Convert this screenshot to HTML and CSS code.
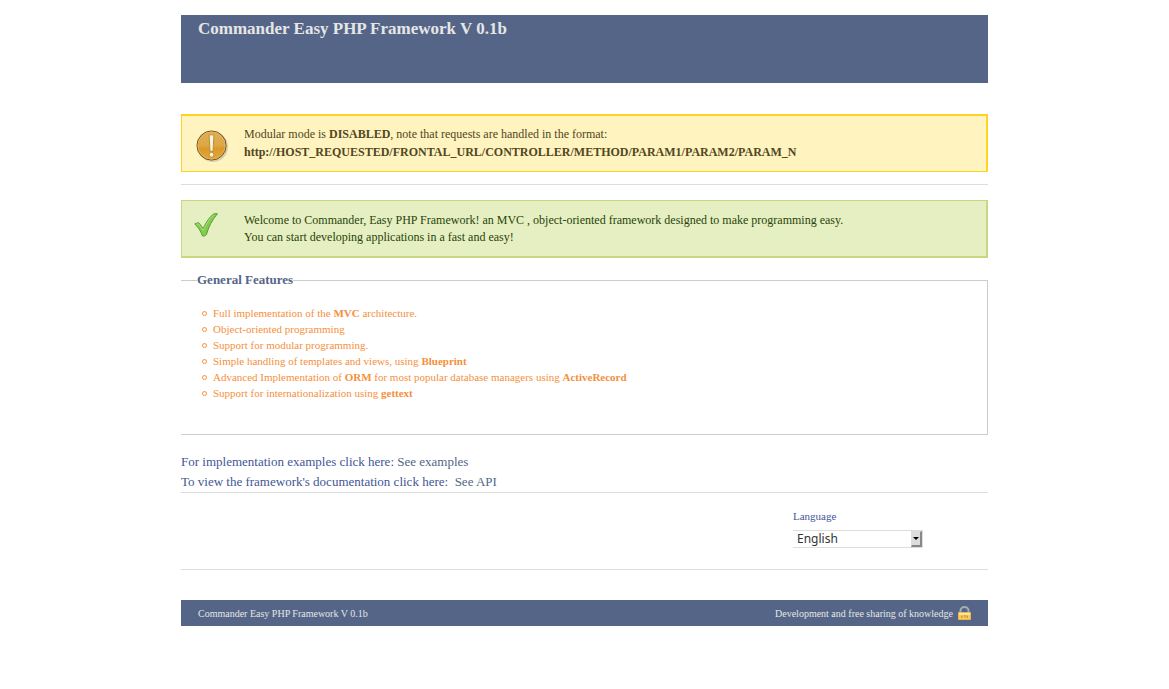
FILE: index.html
```
<!DOCTYPE html>
<html lang="en">
<head>
    <meta charset="UTF-8">
    <meta name="viewport" content="width=device-width, initial-scale=1.0">
    <title>Commander Easy PHP Framework</title>
    <link rel="stylesheet" href="styles.css">
</head>
<body>
    <div class="container">
        <header class="header">
            <h1>Commander Easy PHP Framework V 0.1b</h1>
        </header>

        <div class="notice">
            <svg class="icon-notice" viewBox="0 0 34 34" aria-hidden="true">
                <defs>
                    <linearGradient id="amber" x1="0" y1="0" x2="0" y2="1">
                        <stop offset="0" stop-color="#dfae58"/>
                        <stop offset="0.5" stop-color="#dda743"/>
                        <stop offset="0.6" stop-color="#d99a2a"/>
                        <stop offset="1" stop-color="#e5a838"/>
                    </linearGradient>
                </defs>
                <circle cx="17.5" cy="17.5" r="15.5" fill="#d8cfae"/>
                <circle cx="16" cy="16" r="15" fill="url(#amber)" stroke="#6b4c1c"/>
                <circle cx="16" cy="16" r="14" fill="none" stroke="#e3b258"/>
                <path d="M13.500 5h5l-1 17h-3z" fill="#fdf6d8" stroke="#b98b38"/>
                <circle cx="16" cy="25.500" r="2.500" fill="#fdf6d8" stroke="#b98b38"/>
            </svg>
            <p>Modular mode is <strong>DISABLED</strong>, note that requests are handled in the format:<br>
            <strong>http://HOST_REQUESTED/FRONTAL_URL/CONTROLLER/METHOD/PARAM1/PARAM2/PARAM_N</strong></p>
        </div>
        <hr>
        <div class="success">
            <svg class="icon-success" viewBox="0 0 24 24" aria-hidden="true">
                <path d="M0.700 11 4.500 9.500 9.300 15.500C12 9 16 3.500 20 0.800L23.500 0.700C18 7 14.500 14 12.500 21.500L10.500 23H8.500C6.500 18 4.500 14 0.700 11Z" fill="#82cc4c" stroke="#5c9c3a"/>
                <path d="M2.500 11.300 4.300 10.800 9.300 17.500C12.500 10 16.500 4.500 20.500 1.800" fill="none" stroke="#a9e07c"/>
            </svg>
            <p>Welcome to Commander, Easy PHP Framework! an MVC , object-oriented framework designed to make programming easy.<br>
            You can start developing applications in a fast and easy!</p>
        </div>

        <fieldset>
            <legend>General Features</legend>
            <ul>
                <li>Full implementation of the <strong>MVC</strong> architecture.</li>
                <li>Object-oriented programming</li>
                <li>Support for modular programming.</li>
                <li>Simple handling of templates and views, using <strong>Blueprint</strong></li>
                <li>Advanced Implementation of <strong>ORM</strong> for most popular database managers using <strong>ActiveRecord</strong></li>
                <li>Support for internationalization using <strong>gettext</strong></li>
            </ul>
        </fieldset>

        <div class="links">
            For implementation examples click here: <a href="#">See examples</a><br>
            To view the framework's documentation click here:&nbsp; <a href="#">See API</a>
        </div>
        <hr>
        <form class="language">
            <label for="language">Language</label>
            <div class="select-box">
                <select id="language">
                    <option>English</option>
                    <option>Spanish</option>
                </select>
                <span class="arrow"></span>
            </div>
        </form>
        <hr>
        <footer class="footer">
            <span>Commander Easy PHP Framework V 0.1b</span>
            <span class="share">Development and free sharing of knowledge
                <svg class="icon-lock" viewBox="0 0 13 14" aria-hidden="true">
                    <path d="M2.500 7V4.500a4 3.500 0 0 1 8 0V7" fill="none" stroke="#a9acb0" stroke-width="2"/>
                    <path d="M0.500 6.500h12v7h-12z" fill="#f6cf62" stroke="#e8b648"/>
                    <path d="M1 7h11v1.500H1z" fill="#fdf0b4"/>
                    <path d="M3 9.500h1.500V12H3zM6 9h1.500v2.500H6zM8.500 9.500H10V12H8.500z" fill="#d69a30"/>
                </svg>
            </span>
        </footer>
    </div>
</body>
</html>
```
FILE: styles.css
```
body {
    margin: 0;
    padding: 15px 20px;
    background: #fff;
    color: #435698;
    font-family: "Liberation Serif", "Times New Roman", serif;
    font-size: 13px;
}

.container {
    max-width: 807px;
    margin: 0 auto;
}

.header {
    min-height: 68px;
    padding: 4px 17px 0;
    box-sizing: border-box;
    background: #546587;
}

h1 {
    margin: 0;
    color: #e6e6e6;
    font-size: 17px;
    line-height: 20px;
}

.notice,
.success {
    display: flex;
    min-height: 58px;
    box-sizing: border-box;
    font-size: 12px;
}

.notice p,
.success p {
    margin: 0;
}

.notice {
    margin-top: 31px;
    padding: 9px 14px 8px;
    border: 1px solid #ffd324;
    border-top-width: 2px;
    border-right-width: 2px;
    background: #fff3bf;
    color: #514721;
    line-height: 18px;
}

.success {
    padding: 11px 12px 10px;
    border: 1px solid #c6d880;
    border-right-width: 2px;
    border-bottom-width: 2px;
    background: #e6efc2;
    color: #264409;
    line-height: 17px;
}

.icon-notice {
    flex: none;
    width: 33px;
    height: 33px;
    margin: 5px 15px 0 0;
}

.icon-success {
    flex: none;
    width: 24px;
    height: 24px;
    margin: 1px 26px 0 0;
}

hr {
    height: 1px;
    margin: 0;
    border: 0;
    background: #ddd;
}

.notice + hr {
    margin: 12px 0 15px;
}

fieldset {
    min-height: 162px;
    margin: 15px 0 0;
    padding: 18px 16px 32px;
    box-sizing: border-box;
    border: 1px solid #ccc;
    border-left: 0;
}

legend {
    padding: 0;
    color: #546587;
    font-size: 13px;
    font-weight: bold;
    line-height: 14px;
}

ul {
    margin: 0;
    padding-left: 16px;
    list-style: none;
    color: #f58f3c;
    font-size: 11px;
    line-height: 16px;
}

li::before {
    content: "";
    display: inline-block;
    width: 3px;
    height: 3px;
    margin: 0 6px 1px -11px;
    border: 1px solid #f58f3c;
    border-radius: 50%;
}

.links {
    margin-top: 17px;
    line-height: 20px;
}

a {
    color: #546587;
    text-decoration: none;
}

.language {
    display: flex;
    flex-direction: column;
    width: 195px;
    margin-left: auto;
    padding: 16px 0 21px;
    font-size: 11px;
}

.language label {
    line-height: 14px;
}

.select-box {
    position: relative;
    width: 130px;
    margin-top: 7px;
}

select {
    display: block;
    width: 100%;
    height: 18px;
    padding: 0 4px;
    border: 1px solid #ddd;
    border-left: 0;
    border-radius: 0;
    background: #fff;
    color: #333;
    font-family: "Noto Sans", sans-serif;
    font-size: 12px;
    line-height: 16px;
    appearance: none;
}

.arrow {
    position: absolute;
    top: 1px;
    right: 1px;
    width: 11px;
    height: 16px;
    box-sizing: border-box;
    border: 1px solid #ddd;
    border-right: 2px solid #888;
    border-bottom: 2px solid #888;
    background: #ddd;
    pointer-events: none;
}

.arrow::after {
    content: "";
    position: absolute;
    top: 5px;
    left: 1px;
    border: 3px solid transparent;
    border-top-color: #000;
    border-bottom: 0;
}

.footer {
    display: flex;
    justify-content: space-between;
    align-items: center;
    min-height: 26px;
    margin-top: 30px;
    padding: 0 17px;
    background: #546587;
    color: #e6e6e6;
    font-size: 10px;
}

.share {
    display: flex;
    align-items: center;
    gap: 5px;
}

.icon-lock {
    width: 13px;
    height: 14px;
}
```
